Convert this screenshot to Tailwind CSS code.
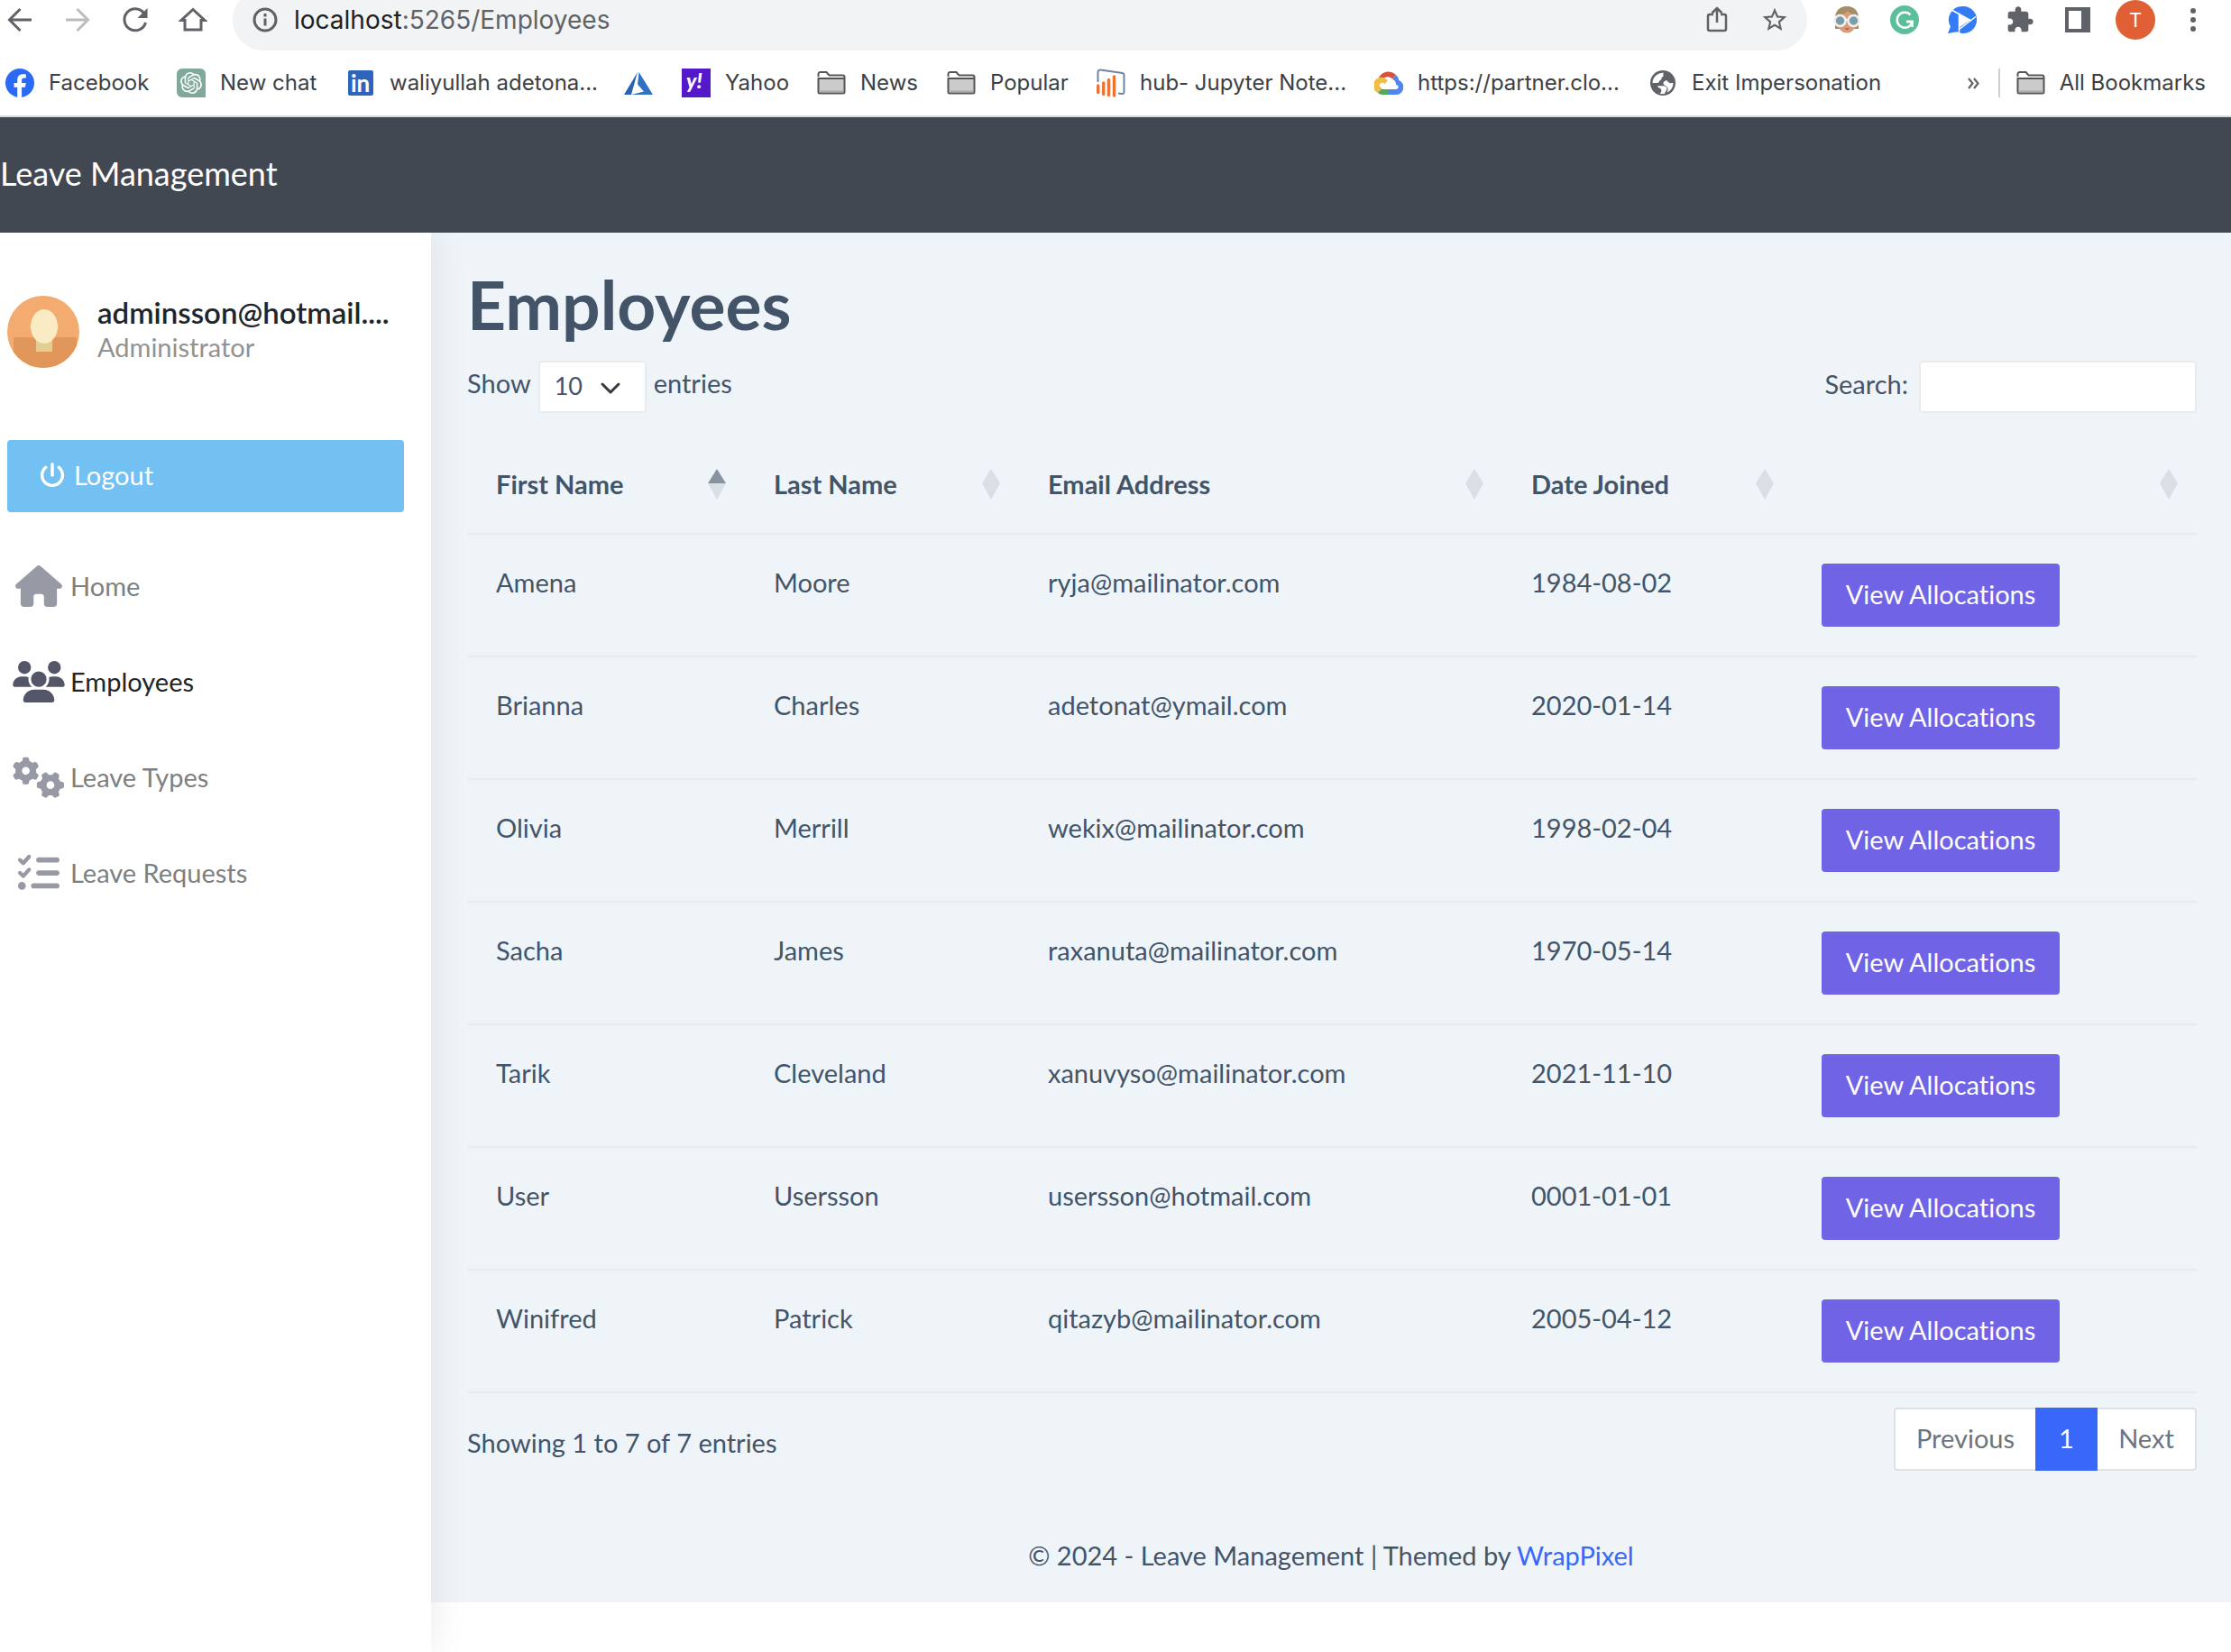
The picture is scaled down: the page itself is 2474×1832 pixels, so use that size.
<!DOCTYPE html>
<html lang="en">
<head>
<meta charset="utf-8">
<title>Employees - Leave Management</title>
<script src="https://cdn.jsdelivr.net/npm/@tailwindcss/browser@4"></script>
</head>
<body class="bg-white min-h-screen flex flex-col font-[Lato,sans-serif] [font-variant-ligatures:none] text-[29px] leading-[42px] text-[#435469]">

<svg class="hidden">
  <symbol id="folder" viewBox="0 0 32 32"><path d="M1.5 9V6a2 2 0 0 1 2-2h7l3 3.500h15a2 2 0 0 1 2 2V10" fill="#fff" stroke="#555" stroke-width="2"/><path d="M1.500 11h29v15a1.500 1.500 0 0 1-1.500 1.500H3A1.500 1.500 0 0 1 1.500 26z" fill="#cbcbcb" stroke="#555" stroke-width="2"/><path d="M2.500 24.500h27v2h-27z" fill="#a8a8a8"/></symbol>
</svg>

<!-- Browser toolbar -->
<div class="h-14 overflow-hidden flex items-end font-[Inter,sans-serif]">
  <div class="h-[68px] w-full shrink-0 flex items-center text-[#5f6368]">
    <nav class="flex w-[258px] shrink-0 pl-[6px] gap-8" aria-label="Navigation">
      <button class="size-8" aria-label="Back"><svg viewBox="0 0 32 32" fill="none" stroke="currentColor" stroke-width="3"><path d="M29 16H5M16.500 4 4.500 16l12 12"/></svg></button>
      <button class="size-8 text-[#babcbe]" aria-label="Forward"><svg viewBox="0 0 32 32" fill="none" stroke="currentColor" stroke-width="3"><path d="M3 16h24M15.500 4l12 12-12 12"/></svg></button>
      <button class="size-8" aria-label="Reload"><svg viewBox="0 0 32 32"><path d="M25.500 8.500A12 12 0 1 0 27.500 19" fill="none" stroke="currentColor" stroke-width="3"/><path d="M29.500 3v11h-11z" fill="currentColor"/></svg></button>
      <button class="size-8" aria-label="Home"><svg viewBox="0 0 32 32" fill="none" stroke="currentColor" stroke-width="3"><path d="M3 16.500h4V27h18V16.500h4L16 4.500z"/></svg></button>
    </nav>
    <div class="h-[68px] flex-1 rounded-full bg-[#f1f3f4] flex items-center pl-5 pr-5">
      <svg class="size-8 shrink-0" viewBox="0 0 32 32" fill="none" stroke="currentColor" stroke-width="3"><circle cx="16" cy="16" r="12"/><path d="M16 14.500v8M16 9v3.500"/></svg>
      <div role="textbox" contenteditable="true" aria-label="Address" class="ml-4 flex-1 text-[28px] leading-8"><span class="text-[#202124]">localhost</span>:5265/Employees</div>
      <button class="size-8 mr-8" aria-label="Share"><svg viewBox="0 0 32 32" fill="none" stroke="currentColor" stroke-width="2.500"><path d="M12 10H8a2 2 0 0 0-2 2v14a2 2 0 0 0 2 2h16a2 2 0 0 0 2-2V12a2 2 0 0 0-2-2h-4M16 19V3.500M10.500 8.500 16 3l5.500 5.500"/></svg></button>
      <button class="size-8" aria-label="Bookmark"><svg viewBox="0 0 24 24" fill="currentColor"><path d="M22 9.240l-7.190-.620L12 2 9.190 8.630 2 9.240l5.460 4.730L5.820 21 12 17.270 18.180 21l-1.630-7.030L22 9.240zM12 15.400l-3.760 2.270 1-4.280-3.320-2.880 4.380-.38L12 6.100l1.710 4.040 4.380.38-3.320 2.880 1 4.280L12 15.400z"/></svg></button>
    </div>
    <div class="flex items-center shrink-0 pl-7 pr-[26px] gap-8">
      <button class="size-8" aria-label="Profile extension"><svg viewBox="0 0 32 32"><path d="M3 26V14C3 5 9 1 16 1s13 4 13 13v12z" fill="#a58d66"/><ellipse cx="16" cy="18.500" rx="10.500" ry="12" fill="#d99b78"/><path d="M5 14C8 10 14 10 17 6c3 4 7 4 10 8V9C25 3 20 1 16 1S7 3 5 9z" fill="#a58d66"/><path d="M13 25.500h6.500l-3.200 1.500z" fill="#a5453f"/><circle cx="8.500" cy="17" r="6" fill="#7d9daa" stroke="#eef1f2" stroke-width="2.500"/><circle cx="23.500" cy="17" r="6" fill="#7d9daa" stroke="#eef1f2" stroke-width="2.500"/><path d="M14 16h4" stroke="#eef1f2" stroke-width="2.500"/></svg></button>
      <button class="size-8" aria-label="Grammar extension"><svg viewBox="0 0 32 32"><circle cx="16" cy="16" r="16" fill="#5cbf9b"/><path d="M22.500 10.500a8.500 8.500 0 1 0 2 7.500h-6" fill="none" stroke="#fff" stroke-width="2.500"/><path d="M18 18h6.500v6" fill="none" stroke="#fff" stroke-width="2.500"/></svg></button>
      <button class="size-8" aria-label="Video extension"><svg viewBox="0 0 32 32"><path d="M17 1a15 15 0 1 1-7 28.200L0 31l3-7.500A15 15 0 0 1 17 1z" fill="#337cf6"/><path d="M12.500 8.500v18L31 12.500M5 5.500 26 17M12.500 10v21" fill="none" stroke="#fff" stroke-width="1.500"/><path d="M12.500 9.500v15l12-8z" fill="#fff"/></svg></button>
      <button class="size-8" aria-label="Extensions"><svg viewBox="0 0 24 24" fill="currentColor"><path d="M20.500 11H19V7c0-1.100-.9-2-2-2h-4V3.500C13 2.120 11.880 1 10.500 1S8 2.120 8 3.500V5H4c-1.100 0-1.990.9-1.990 2v3.800H3.500c1.490 0 2.700 1.210 2.700 2.700s-1.210 2.700-2.700 2.700H2V20c0 1.100.9 2 2 2h3.800v-1.500c0-1.490 1.210-2.700 2.700-2.700 1.490 0 2.700 1.210 2.700 2.700V22H17c1.100 0 2-.9 2-2v-4h1.500c1.380 0 2.500-1.120 2.500-2.500S21.880 11 20.500 11z"/></svg></button>
      <button class="size-8" aria-label="Side panel"><svg viewBox="0 0 32 32"><path d="M2 2h28v28H2z" fill="currentColor"/><path d="M6 6h14v20H6z" fill="#fff"/></svg></button>
      <button class="size-11 -mx-[6px] rounded-full bg-[#e15f34] text-white text-[22px] leading-[44px]" aria-label="Account">T</button>
      <button class="size-8" aria-label="Menu"><svg viewBox="0 0 32 32" fill="currentColor"><circle cx="16" cy="6" r="3"/><circle cx="16" cy="16" r="3"/><circle cx="16" cy="26" r="3"/></svg></button>
    </div>
  </div>
</div>

<!-- Bookmarks bar -->
<div class="h-[74px] border-b-2 border-[#d8dadc] flex items-center pl-[6px] pr-7 font-[Inter,sans-serif] text-[24px] leading-8 text-[#3c4043] whitespace-nowrap">
  <a href="#" class="w-[190px] shrink-0 flex items-center gap-4"><svg class="size-8 shrink-0" viewBox="0 0 32 32"><circle cx="16" cy="16" r="16" fill="#2b6af6"/><path d="M13.200 32V20.700H9.500V16h3.700v-3.200c0-4.600 2.500-6.600 6.300-6.600 1.500 0 2.600.1 3.300.3v4.100h-2.200c-1.900 0-2.500.9-2.500 2.600V16h4.600l-.8 4.700h-3.800V32z" fill="#fff"/></svg>Facebook</a>
  <a href="#" class="w-[188px] shrink-0 flex items-center gap-4"><svg class="size-8 shrink-0" viewBox="0 0 32 32"><path d="M6 0h20a6 6 0 0 1 6 6v26H6a6 6 0 0 1-6-6V6a6 6 0 0 1 6-6z" fill="#80a99a"/><path transform="translate(4 4)" fill="#fff" d="M22.282 9.821a5.985 5.985 0 0 0-.516-4.911 6.046 6.046 0 0 0-6.510-2.900A6.065 6.065 0 0 0 4.981 4.182a5.985 5.985 0 0 0-3.998 2.900 6.046 6.046 0 0 0 .743 7.097 5.980 5.980 0 0 0 .511 4.911 6.051 6.051 0 0 0 6.515 2.900A5.985 5.985 0 0 0 13.260 24a6.056 6.056 0 0 0 5.772-4.206 5.989 5.989 0 0 0 3.998-2.900 6.056 6.056 0 0 0-.748-7.073zm-9.022 12.608a4.476 4.476 0 0 1-2.876-1.041l.142-.080 4.778-2.758a.795.795 0 0 0 .393-.681v-6.737l2.020 1.169a.071.071 0 0 1 .038.052v5.583a4.504 4.504 0 0 1-4.495 4.494zm-9.661-4.125a4.471 4.471 0 0 1-.535-3.014l.142.085 4.783 2.758a.771.771 0 0 0 .781 0l5.843-3.369v2.332a.080.080 0 0 1-.033.062L9.740 19.950a4.499 4.499 0 0 1-6.141-1.646zM2.341 7.896a4.485 4.485 0 0 1 2.366-1.973V11.600a.766.766 0 0 0 .388.677l5.814 3.354-2.020 1.169a.076.076 0 0 1-.071 0l-4.830-2.787A4.504 4.504 0 0 1 2.341 7.872zm16.596 3.856L13.104 8.364 15.119 7.200a.076.076 0 0 1 .071 0l4.830 2.791a4.494 4.494 0 0 1-.677 8.104v-5.677a.790.790 0 0 0-.407-.667zm2.011-3.023l-.142-.085-4.774-2.782a.776.776 0 0 0-.785 0L9.409 9.230V6.897a.066.066 0 0 1 .028-.062l4.830-2.787a4.499 4.499 0 0 1 6.680 4.660zM8.307 12.863l-2.020-1.164a.080.080 0 0 1-.038-.057V6.074a4.499 4.499 0 0 1 7.376-3.454l-.142.081L8.704 5.459a.795.795 0 0 0-.393.681zm1.098-2.365l2.602-1.500 2.607 1.500v2.999l-2.597 1.500-2.607-1.500z"/></svg>New chat</a>
  <a href="#" class="w-[308px] shrink-0 flex items-center gap-4"><svg class="size-8 shrink-0" viewBox="0 0 32 32"><rect x="2" y="2" width="28" height="28" rx="2" fill="#2d65bc"/><text x="5" y="26" font-size="26" font-weight="700" font-family="Lato" fill="#fff">in</text></svg>waliyullah adetona...</a>
  <a href="#" class="w-16 shrink-0" aria-label="Azure"><svg class="size-8" viewBox="0 0 32 32"><path d="M15 4 0 29h8z" fill="#2a62b5"/><path d="M16.500 4 32 29H8l14-3.500-7-8z" fill="#2f72c4"/></svg></a>
  <a href="#" class="w-[150px] shrink-0 flex items-center gap-4"><svg class="size-8 shrink-0" viewBox="0 0 32 32"><path d="M0 0h32v32H0z" fill="#5519cb"/><text x="5" y="22" font-size="23" font-weight="900" font-style="italic" font-family="Lato" fill="#fff">y!</text></svg>Yahoo</a>
  <a href="#" class="w-36 shrink-0 flex items-center gap-4"><svg class="size-8 shrink-0"><use href="#folder"/></svg>News</a>
  <a href="#" class="w-[166px] shrink-0 flex items-center gap-4"><svg class="size-8 shrink-0"><use href="#folder"/></svg>Popular</a>
  <a href="#" class="w-[308px] shrink-0 flex items-center gap-4"><svg class="size-8 shrink-0" viewBox="0 0 32 32" fill="none" stroke-width="2"><path d="M1.500 15V4a2.500 2.500 0 0 1 3-2.500l24 3.500a2.500 2.500 0 0 1 2 2.500V26a2 2 0 0 1-2.500 2L24 27.500" stroke="#6d84a3"/><path d="M1.700 19v7.500M7.700 16v12.500M13.500 12.500v17M19.500 9v21" stroke="#ec7437" stroke-width="3.400" stroke-linecap="round"/></svg>hub- Jupyter Note...</a>
  <a href="#" class="w-[304px] shrink-0 flex items-center gap-4"><svg class="size-8 shrink-0" viewBox="0 0 32 32"><path d="M4.500 11A12 12 0 0 1 24 7l-4 4.500c-3-3-8-3-10.500.5z" fill="#d8503e"/><path d="M24 7c2 2 3 4 3.200 6A8.300 8.300 0 0 1 24 29h-8v-6h8c3.500 0 3.500-5 0-5v-1c0-2-1.500-4-4-5.500z" fill="#5286ee"/><path d="M4 27A9 9 0 1 1 15 13.500L11.500 17c-2.500-3-7-.5-5.500 3l2.500 2.500z" fill="#f1bd42"/><path d="M4 27l4-4.500 1 .5h7v6H9c-2 0-4-1-5-2z" fill="#58a55c"/></svg>https://partner.clo...</a>
  <a href="#" class="shrink-0 flex items-center gap-4"><svg class="size-8 shrink-0" viewBox="0 0 32 32"><circle cx="16" cy="16" r="14" fill="#5f6368"/><path d="M4.500 16A11.500 11.500 0 0 1 17 4.700c-2 2 1 3-1 4.300-2.500 1.500-.5 3-3 4-1 .4-1 3-3 3zM12.500 27.500c1.500-1 2.500-2 1.500-4.500-.8-1.600-3-1-4-4 4 1 8-1 10 2 1.500 2.500-1 3.500-2 7-2 .3-4 .2-5.500-.5zM18 14c1.500-1.500 3-.5 4 1 1.300 1.700 3.500 1 5.500 1a11.500 11.500 0 0 1-7 10.500c1-2 2-3.500 0-6-1.500-2-4-2-4-4 0-1.500.5-1.500 1.500-2.500z" fill="#fff"/></svg>Exit Impersonation</a>
  <button class="ml-auto text-[#5f6368] pr-5" aria-label="More bookmarks"><svg class="size-4" viewBox="0 0 16 16" fill="none" stroke="currentColor" stroke-width="2.200"><path d="M3 3l4.500 5.500L3 14M9 3l4.500 5.500L9 14"/></svg></button>
  <div class="h-8 w-[2px] shrink-0 bg-[#cdcfd1] mr-[18px]"></div>
  <a href="#" class="flex shrink-0 items-center gap-4"><svg class="size-8 shrink-0"><use href="#folder"/></svg>All Bookmarks</a>
</div>

<!-- Application header -->
<header class="h-32 pb-1 bg-[#424852] text-white flex items-center text-[36px] font-[Lato,sans-serif]"><a href="#">Leave Management</a></header>

<div class="flex flex-1">
  <aside class="relative w-[478px] shrink-0 bg-white shadow-[2px_0_40px_rgba(0,0,0,0.08)] pl-2 pr-[30px] pt-[70px] [clip-path:inset(0_-50px_0_0)]">
    <div class="flex items-start gap-5">
      <svg class="size-20 shrink-0 rounded-full" viewBox="0 0 80 80"><path d="M0 0h80v80H0z" fill="#f3ab70"/><path d="M7 48a2 2 0 0 1 2-2h66a2 2 0 0 1 2 2v34H7z" fill="#e19759"/><path d="M32 46h18v16H32z" fill="#e2ce92"/><ellipse cx="41" cy="34" rx="16" ry="5" fill="#e2ce92"/><ellipse cx="41" cy="34" rx="15" ry="19" fill="#fbebc4"/></svg>
      <div class="min-w-0 flex-1">
        <h2 class="truncate text-[33px] leading-9 font-semibold text-[#212529]">adminsson@hotmail....</h2>
        <p class="text-[#909294]">Administrator</p>
      </div>
    </div>
    <button class="mt-20 h-20 w-full rounded-[4px] bg-[#73c0f3] text-white flex items-center gap-[10px] pl-9 pb-[2px]">
      <svg class="size-7" viewBox="0 0 512 512" fill="currentColor"><path d="M288 32c0-17.700-14.300-32-32-32s-32 14.300-32 32V256c0 17.700 14.300 32 32 32s32-14.300 32-32V32zM143.500 120.600c13.600-11.300 15.400-31.500 4.100-45.100s-31.500-15.400-45.100-4.100C49.700 115.400 16 181.800 16 256c0 132.500 107.500 240 240 240s240-107.500 240-240c0-74.200-33.800-140.600-86.600-184.600c-13.600-11.300-33.800-9.400-45.100 4.100s-9.400 33.800 4.100 45.100c38.900 32.300 63.500 81 63.500 135.400c0 97.200-78.800 176-176 176s-176-78.800-176-176c0-54.400 24.700-103.100 63.500-135.400z"/></svg>
      Logout
    </button>
    <nav class="mt-[29px] text-[#7d7f82]" aria-label="Main">
      <a href="#" class="h-[106px] flex items-center"><svg class="h-[46px] w-[70px] text-[#979aa5]" viewBox="0 0 576 512" fill="currentColor"><path d="M575.800 255.500c0 18-15 32.100-32 32.100h-32l.7 160.200c0 2.700-.2 5.400-.5 8.100V472c0 22.100-17.900 40-40 40H392c-22.100 0-40-17.900-40-40V384c0-17.700-14.300-32-32-32H256c-17.700 0-32 14.300-32 32v88c0 22.100-17.900 40-40 40H104c-22.100 0-40-17.900-40-40V287.600H32c-18 0-32-14-32-32.100c0-9 3-17 10-24L266.400 8c7-7 15-8 22-8s15 2 21 7L564.800 231.500c8 7 12 15 11 24z"/></svg>Home</a>
      <a href="#" class="h-[106px] flex items-center text-[#212529]" aria-current="page"><svg class="h-[46px] w-[70px] text-[#535668]" viewBox="0 0 640 512" fill="currentColor"><path d="M144 0a80 80 0 1 1 0 160A80 80 0 1 1 144 0zM512 0a80 80 0 1 1 0 160A80 80 0 1 1 512 0zM0 298.700C0 239.800 47.800 192 106.700 192l42.700 0c15.900 0 31 3.500 44.600 9.700c-1.300 7.200-1.900 14.700-1.900 22.300c0 38.200 16.800 72.500 43.300 96L21.300 320C9.600 320 0 310.400 0 298.700zM405.300 320h-.7c26.600-23.500 43.300-57.800 43.300-96c0-7.600-.7-15-1.900-22.300c13.600-6.300 28.700-9.700 44.600-9.700l42.700 0C592.200 192 640 239.800 640 298.700c0 11.800-9.600 21.300-21.300 21.300zM224 224a96 96 0 1 1 192 0 96 96 0 1 1-192 0zM128 485.300C128 411.700 187.700 352 261.300 352l117.300 0C452.300 352 512 411.700 512 485.300c0 14.700-11.900 26.700-26.700 26.700l-330.700 0c-14.700 0-26.700-11.900-26.700-26.700z"/></svg>Employees</a>
      <a href="#" class="h-[106px] flex items-center"><svg class="h-[46px] w-[70px] text-[#979aa5]" viewBox="0 0 640 512" fill="currentColor"><path d="M308.500 135.300c7.100-6.300 9.900-16.200 6.200-25c-2.300-5.300-4.800-10.500-7.600-15.500L304 89.400c-3-5-6.300-9.900-9.800-14.600c-5.700-7.600-15.700-10.100-24.700-7.100l-28.200 9.300c-10.700-8.800-23-16-36.200-20.900L199 27.100c-1.900-9.300-9.100-16.700-18.500-17.800C173.900 8.400 167.200 8 160.400 8h-.7c-6.800 0-13.500 .4-20.100 1.200c-9.400 1.100-16.600 8.600-18.500 17.800L115 56.100c-13.300 5-25.500 12.100-36.200 20.900L50.500 67.800c-9-3-19-.5-24.700 7.100c-3.500 4.700-6.800 9.600-9.900 14.600l-3 5.300c-2.800 5-5.300 10.200-7.600 15.600c-3.700 8.700-.9 18.600 6.200 25l22.200 19.800C32.600 161.900 32 168.900 32 176s.6 14.100 1.700 20.900L11.500 216.700c-7.100 6.300-9.900 16.200-6.200 25c2.300 5.300 4.800 10.500 7.600 15.600l3 5.200c3 5.100 6.300 9.900 9.900 14.600c5.700 7.600 15.700 10.100 24.700 7.100l28.200-9.300c10.700 8.800 23 16 36.200 20.900l6.100 29.100c1.900 9.300 9.100 16.700 18.500 17.800c6.700 .8 13.500 1.200 20.400 1.200s13.700-.4 20.400-1.200c9.400-1.100 16.600-8.600 18.500-17.800l6.100-29.100c13.300-5 25.500-12.100 36.200-20.900l28.200 9.300c9 3 19 .5 24.700-7.100c3.500-4.700 6.800-9.500 9.800-14.600l3.100-5.400c2.800-5 5.300-10.200 7.600-15.500c3.700-8.700 .9-18.600-6.200-25l-22.200-19.800c1.100-6.800 1.700-13.800 1.700-20.900s-.6-14.100-1.700-20.900l22.200-19.800zM112 176a48 48 0 1 1 96 0 48 48 0 1 1 -96 0zM504.700 500.500c6.300 7.100 16.200 9.900 25 6.200c5.300-2.300 10.500-4.800 15.500-7.600l5.400-3.100c5-3 9.900-6.300 14.600-9.800c7.600-5.700 10.100-15.700 7.100-24.700l-9.300-28.200c8.800-10.700 16-23 20.900-36.200l29.100-6.100c9.300-1.900 16.700-9.100 17.800-18.500c.8-6.700 1.200-13.500 1.200-20.400s-.4-13.700-1.200-20.400c-1.100-9.400-8.600-16.600-17.800-18.500L583.900 307c-5-13.300-12.100-25.500-20.900-36.200l9.300-28.200c3-9 .5-19-7.100-24.700c-4.700-3.500-9.600-6.800-14.600-9.900l-5.300-3c-5-2.800-10.200-5.300-15.600-7.600c-8.700-3.700-18.600-.9-25 6.200l-19.800 22.200c-6.800-1.100-13.800-1.700-20.900-1.700s-14.100 .6-20.900 1.700l-19.800-22.200c-6.300-7.100-16.200-9.900-25-6.200c-5.300 2.300-10.500 4.800-15.600 7.600l-5.200 3c-5.100 3-9.900 6.300-14.600 9.900c-7.600 5.700-10.100 15.700-7.100 24.700l9.300 28.200c-8.800 10.700-16 23-20.900 36.200L315.100 313c-9.300 1.900-16.700 9.100-17.800 18.500c-.8 6.700-1.200 13.500-1.200 20.400s.4 13.700 1.200 20.400c1.100 9.400 8.600 16.600 17.800 18.500l29.100 6.100c5 13.300 12.100 25.500 20.900 36.200l-9.300 28.200c-3 9-.5 19 7.100 24.700c4.700 3.500 9.500 6.800 14.600 9.800l5.400 3.100c5 2.800 10.200 5.300 15.500 7.600c8.700 3.700 18.600 .9 25-6.200l19.800-22.200c6.800 1.100 13.800 1.700 20.900 1.700s14.100-.6 20.900-1.700l19.800 22.200zM464 304a48 48 0 1 1 0 96 48 48 0 1 1 0-96z"/></svg>Leave Types</a>
      <a href="#" class="h-[106px] flex items-center"><svg class="h-[46px] w-[70px] text-[#979aa5]" viewBox="0 0 512 512" fill="currentColor"><path d="M152.100 38.200c9.900 8.900 10.700 24 1.800 33.900l-72 80c-4.400 4.900-10.600 7.800-17.200 7.900s-12.900-2.400-17.600-7L7 113C-2.300 103.600-2.300 88.400 7 79s24.600-9.400 33.900 0l22.100 22.100 55.100-61.200c8.900-9.900 24-10.700 33.900-1.800zm0 160c9.900 8.900 10.700 24 1.800 33.900l-72 80c-4.400 4.900-10.600 7.800-17.200 7.900s-12.900-2.400-17.600-7L7 273c-9.400-9.400-9.400-24.600 0-33.900s24.600-9.400 33.900 0l22.100 22.100 55.100-61.200c8.900-9.900 24-10.700 33.900-1.800zM224 96c0-17.700 14.300-32 32-32H480c17.700 0 32 14.300 32 32s-14.300 32-32 32H256c-17.700 0-32-14.300-32-32zm0 160c0-17.700 14.300-32 32-32H480c17.700 0 32 14.300 32 32s-14.300 32-32 32H256c-17.700 0-32-14.300-32-32zM160 416c0-17.700 14.300-32 32-32H480c17.700 0 32 14.300 32 32s-14.300 32-32 32H192c-17.700 0-32-14.300-32-32zM48 368a48 48 0 1 1 0 96 48 48 0 1 1 0-96z"/></svg>Leave Requests</a>
    </nav>
  </aside>

  <div class="flex-1 min-w-0">
    <div class="bg-[#eff4f9]">
      <main class="pl-10 pr-[38px] pt-9">
        <h1 class="text-[75px] leading-[86px] font-bold">Employees</h1>
        <div class="mt-5 flex items-start justify-between">
          <div class="flex items-start gap-2">
            <label for="length" class="leading-[50px]">Show</label>
            <span class="relative">
              <select id="length" class="appearance-none block h-[58px] w-[120px] rounded-[4px] border-2 border-[#e9ecef] bg-white pl-4 pb-[2px] text-[27px]"><option>10</option><option>25</option><option>50</option></select>
              <svg class="absolute right-7 top-[18px] size-6 pointer-events-none" viewBox="0 0 24 24" fill="none" stroke="#343a40" stroke-width="3" stroke-linecap="round" stroke-linejoin="round"><path d="M3 8l9 9 9-9"/></svg>
            </span>
            <span class="leading-[50px]">entries</span>
          </div>
          <div class="flex items-start gap-3">
            <label for="search" class="leading-[52px]">Search:</label>
            <input id="search" type="search" class="h-[58px] w-[308px] rounded-[4px] border-2 border-[#e9ecef] bg-white px-4">
          </div>
        </div>

        <table class="mt-[25px] w-full border-collapse text-left">
          <thead>
            <tr class="h-[109px] border-b-2 border-[#e9ecef] font-bold">
              <th scope="col" class="w-[308px] pl-8 pr-[21px]"><div class="flex items-center justify-between">First Name<svg class="h-[34px] w-5" viewBox="0 0 20 34"><path d="M10 0 20 16H0z" fill="#8793a1"/><path d="M10 34 0 16h20z" fill="#d9dfe4"/></svg></div></th>
              <th scope="col" class="w-[304px] pl-8 pr-[21px]"><div class="flex items-center justify-between">Last Name<svg class="h-[34px] w-5" viewBox="0 0 20 34"><path d="M10 0 20 16 10 34 0 16z" fill="#d9dfe5"/></svg></div></th>
              <th scope="col" class="w-[536px] pl-8 pr-[21px]"><div class="flex items-center justify-between">Email Address<svg class="h-[34px] w-5" viewBox="0 0 20 34"><path d="M10 0 20 16 10 34 0 16z" fill="#d9dfe5"/></svg></div></th>
              <th scope="col" class="w-[322px] pl-8 pr-[21px]"><div class="flex items-center justify-between">Date Joined<svg class="h-[34px] w-5" viewBox="0 0 20 34"><path d="M10 0 20 16 10 34 0 16z" fill="#d9dfe5"/></svg></div></th>
              <th scope="col" class="pl-8 pr-[21px]" aria-label="Actions"><div class="flex items-center justify-end"><svg class="h-[34px] w-5" viewBox="0 0 20 34"><path d="M10 0 20 16 10 34 0 16z" fill="#d9dfe5"/></svg></div></th>
            </tr>
          </thead>
          <tbody id="rows"></tbody>
        </table>

        <div class="mt-4 flex items-start justify-between">
          <p class="pt-[18px]">Showing 1 to 7 of 7 entries</p>
          <nav class="flex h-[70px] text-[#6c757d]" aria-label="Pages">
            <button class="w-[157px] rounded-l-[4px] border-2 border-r-0 border-[#dee2e6] bg-white pb-[2px]">Previous</button>
            <button class="w-[69px] bg-[#3867fa] pb-[2px] text-white">1</button>
            <button class="w-[110px] rounded-r-[4px] border-2 border-l-0 border-[#dee2e6] bg-white pb-[2px]">Next</button>
          </nav>
        </div>
      </main>
      <footer class="pt-[73px] pb-[31px] text-center">© 2024 - Leave Management | Themed by <a href="#" class="text-[#3867fa]">WrapPixel</a></footer>
    </div>
  </div>
</div>

<script>
  const employees = [
    ["Amena", "Moore", "ryja@mailinator.com", "1984-08-02"],
    ["Brianna", "Charles", "adetonat@ymail.com", "2020-01-14"],
    ["Olivia", "Merrill", "wekix@mailinator.com", "1998-02-04"],
    ["Sacha", "James", "raxanuta@mailinator.com", "1970-05-14"],
    ["Tarik", "Cleveland", "xanuvyso@mailinator.com", "2021-11-10"],
    ["User", "Usersson", "usersson@hotmail.com", "0001-01-01"],
    ["Winifred", "Patrick", "qitazyb@mailinator.com", "2005-04-12"],
  ];
  document.getElementById("rows").innerHTML = employees.map(cells =>
    '<tr class="border-b-2 border-[#e9ecef]">' +
    cells.map(c => '<td class="px-8 py-8 align-top">' + c + '</td>').join("") +
    '<td class="px-8 py-8 align-top"><a href="#" class="flex h-[70px] w-[264px] items-center justify-center rounded-[4px] bg-[#7063e5] pb-[2px] text-white">View Allocations</a></td></tr>'
  ).join("");
</script>
</body>
</html>
